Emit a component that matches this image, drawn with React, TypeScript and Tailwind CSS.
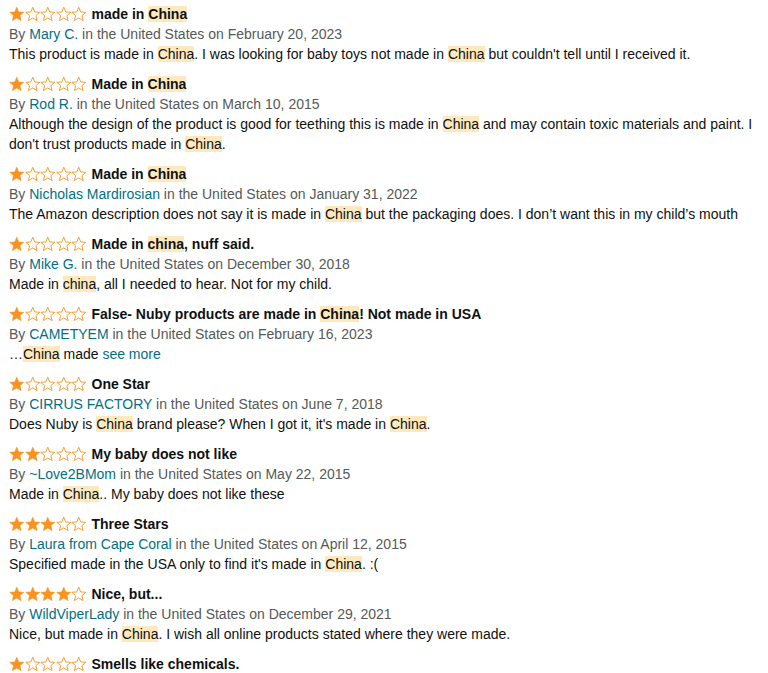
import React from "react"

type Review = {
	stars: number
	title: string
	author: string
	date: string
	body: string
	more?: boolean
}

const reviews: Review[] = [
	{
		stars: 1,
		title: "made in China",
		author: "Mary C.",
		date: "February 20, 2023",
		body: "This product is made in China. I was looking for baby toys not made in China but couldn't tell until I received it.",
	},
	{
		stars: 1,
		title: "Made in China",
		author: "Rod R.",
		date: "March 10, 2015",
		body: "Although the design of the product is good for teething this is made in China and may contain toxic materials and paint. I don't trust products made in China.",
	},
	{
		stars: 1,
		title: "Made in China",
		author: "Nicholas Mardirosian",
		date: "January 31, 2022",
		body: "The Amazon description does not say it is made in China but the packaging does. I don\u2019t want this in my child\u2019s mouth",
	},
	{
		stars: 1,
		title: "Made in china, nuff said.",
		author: "Mike G.",
		date: "December 30, 2018",
		body: "Made in china, all I needed to hear. Not for my child.",
	},
	{
		stars: 1,
		title: "False- Nuby products are made in China! Not made in USA",
		author: "CAMETYEM",
		date: "February 16, 2023",
		body: "\u2026China made",
		more: true,
	},
	{
		stars: 1,
		title: "One Star",
		author: "CIRRUS FACTORY",
		date: "June 7, 2018",
		body: "Does Nuby is China brand please? When I got it, it's made in China.",
	},
	{
		stars: 2,
		title: "My baby does not like",
		author: "~Love2BMom",
		date: "May 22, 2015",
		body: "Made in China.. My baby does not like these",
	},
	{
		stars: 3,
		title: "Three Stars",
		author: "Laura from Cape Coral",
		date: "April 12, 2015",
		body: "Specified made in the USA only to find it's made in China. :(",
	},
	{
		stars: 4,
		title: "Nice, but...",
		author: "WildViperLady",
		date: "December 29, 2021",
		body: "Nice, but made in China. I wish all online products stated where they were made.",
	},
]

const Highlight = ({ text }: { text: string }) => (
	<>
		{text.split(/(china)/i).map((part, i) =>
			/^china$/i.test(part) ? (
				<span key={i} className="bg-[#fde9bd]">
					{part}
				</span>
			) : (
				<React.Fragment key={i}>{part}</React.Fragment>
			)
		)}
	</>
)

const Star = ({ filled }: { filled: boolean }) => (
	<svg width="15.5" height="16" viewBox="0 0 24 24" className="shrink-0">
		<polygon
			points="12,1.5 15,8.8 22.8,9.4 16.9,14.5 18.7,22.2 12,18.1 5.3,22.2 7.1,14.5 1.2,9.4 9,8.8"
			fill={filled ? "#f7931e" : "none"}
			stroke="#f7931e"
			strokeWidth={filled ? 1 : 1.4}
			strokeLinejoin="round"
		/>
	</svg>
)

const Stars = ({ count }: { count: number }) => (
	<div className="flex items-center">
		{[0, 1, 2, 3, 4].map((i) => (
			<Star key={i} filled={i < count} />
		))}
	</div>
)

export default function App() {
	return (
		<main
			className="w-[768px] h-[673px] overflow-hidden bg-white pl-[9px] pr-[4px] pt-[4px] text-[14px] leading-[20px] text-[#0f1111]"
			style={{ fontFamily: '"Liberation Sans", Arial, sans-serif' }}>
			{reviews.map((r, idx) => (
				<section key={idx} className="mb-[10px]">
					<div className="flex items-center gap-[5px]">
						<Stars count={r.stars} />
						<p className="font-bold whitespace-nowrap">
							<Highlight text={r.title} />
						</p>
					</div>
					<p className="text-[#565959]">
						By <span className="text-[#007185]">{r.author}</span> in the United States on{" "}
						{r.date}
					</p>
					<p>
						<Highlight text={r.body} />
						{r.more && <span className="text-[#007185]"> see more</span>}
					</p>
				</section>
			))}
			<section>
				<div className="flex items-center gap-[5px]">
					<Stars count={1} />
					<p className="font-bold whitespace-nowrap">Smells like chemicals.</p>
				</div>
			</section>
		</main>
	)
}
